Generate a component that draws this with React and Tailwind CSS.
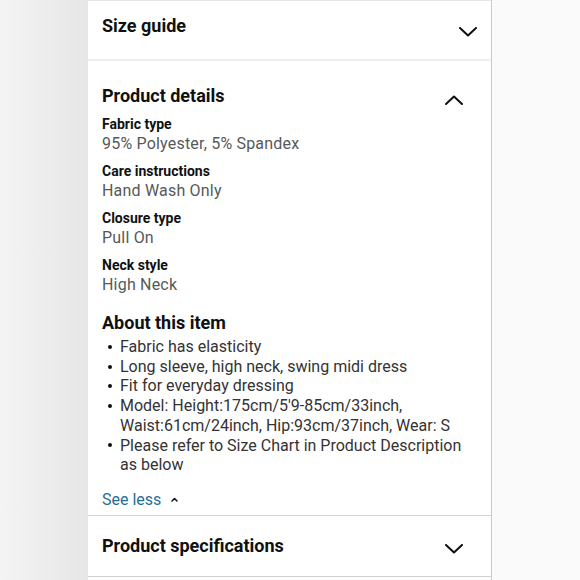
import React from 'react'

const font = { fontFamily: 'Roboto, "Liberation Sans", Arial, sans-serif' }

function Chevron({ up = false, className = '' }) {
  return (
    <svg width="18" height="10" viewBox="0 0 18 10" fill="none" stroke="#0f1111" strokeWidth="2" strokeLinecap="round" strokeLinejoin="round" className={className}>
      {up ? <path d="M1 9L9 1.5L17 9" /> : <path d="M1 1L9 8.5L17 1" />}
    </svg>
  )
}

const details = [
  ['Fabric type', '95% Polyester, 5% Spandex'],
  ['Care instructions', 'Hand Wash Only'],
  ['Closure type', 'Pull On'],
  ['Neck style', 'High Neck'],
]

const bullets = [
  ['Fabric has elasticity'],
  ['Long sleeve, high neck, swing midi dress'],
  ['Fit for everyday dressing'],
  ['Model: Height:175cm/5\'9-85cm/33inch,', 'Waist:61cm/24inch, Hip:93cm/37inch, Wear: S'],
  ['Please refer to Size Chart in Product Description', 'as below'],
]

export default function App() {
  return (
    <div className="flex h-[580px] w-[580px] overflow-hidden" style={font}>
      {/* left backdrop */}
      <div className="w-[88px] shrink-0 bg-gradient-to-r from-[#f4f4f4] to-[#e6e6e6]" />

      {/* panel */}
      <div className="w-[404px] shrink-0 bg-white border-r border-[#c9c9c9] flex flex-col">
        {/* size guide */}
        <div className="border-t border-[#e6e6e6] h-[61px] border-b-2 border-b-[#eeeeee] flex items-start justify-between pl-[14px] pr-[14px] pt-[13px]">
          <h2 className="text-[18px] leading-[24px] font-bold text-[#0f1111]">Size guide</h2>
          <Chevron className="mt-[13px]" />
        </div>

        {/* product details */}
        <div className="pl-[14px] pr-[28px] pt-[23px] pb-[5px] border-b border-[#d5d5d5]">
          <div className="flex items-start justify-between">
            <h2 className="text-[18px] leading-[24px] font-bold text-[#0f1111]">Product details</h2>
            <Chevron up className="mt-[11px]" />
          </div>

          <div className="mt-[7px] flex flex-col gap-[8px]">
            {details.map(([label, value]) => (
              <div key={label}>
                <p className="text-[14px] leading-[19px] font-bold text-[#0f1111]">{label}</p>
                <p className="text-[16px] leading-[20px] tracking-[0.2px] text-[#565959]">{value}</p>
              </div>
            ))}
          </div>

          <h2 className="mt-[16px] text-[18px] leading-[24px] font-bold text-[#0f1111]">About this item</h2>
          <ul className="mt-[2px]">
            {bullets.map((lines) => (
              <li key={lines[0]} className="flex text-[16px] leading-[19.7px] text-[#333333]">
                <span className="w-[18px] h-[19.7px] shrink-0 flex items-center pl-[6px]">
                  <span className="block w-[4px] h-[4px] rounded-full bg-[#0f1111]" />
                </span>
                <span>
                  {lines.map((l, i) => (
                    <React.Fragment key={i}>
                      {i > 0 && <br />}
                      {l}
                    </React.Fragment>
                  ))}
                </span>
              </li>
            ))}
          </ul>

          <button className="mt-[15px] flex items-center gap-[10px] text-[16px] leading-[20px] text-[#2a6d93]">
            See less
            <svg width="7" height="5" viewBox="0 0 7 5" fill="none" stroke="#0f1111" strokeWidth="1.5" strokeLinecap="round" strokeLinejoin="round">
              <path d="M1 4L3.5 1.5L6 4" />
            </svg>
          </button>
        </div>

        {/* product specifications */}
        <div className="pl-[14px] pr-[28px] pt-[18px] h-[61px] border-b border-[#cfcfcf] flex items-start justify-between">
          <h2 className="text-[18px] leading-[24px] font-bold text-[#0f1111]">Product specifications</h2>
          <Chevron className="mt-[10px]" />
        </div>
      </div>

      {/* right backdrop */}
      <div className="flex-1 bg-[#fafafa]" />
    </div>
  )
}
